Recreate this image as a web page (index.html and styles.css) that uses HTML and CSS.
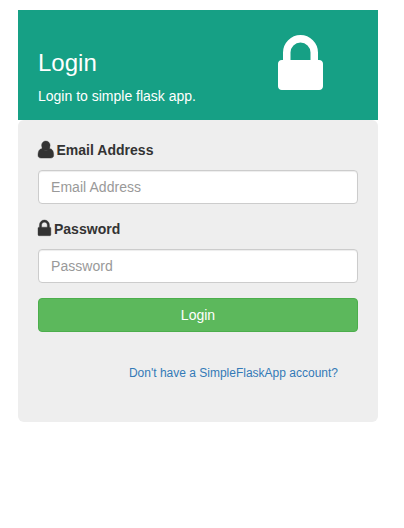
FILE: index.html
```html
<!DOCTYPE html>
<html lang="en">
<head>
<meta charset="utf-8">
<title>Login</title>
<link rel="stylesheet" href="styles.css">
</head>
<body>
<main class="card">
  <header class="card-top">
    <div class="card-title">
      <h3>Login</h3>
      <p>Login to simple flask app.</p>
    </div>
    <svg class="big-lock" viewBox="0 128 1152 1408"><path fill="#fff" d="M320 768h512v-192q0-106-75-181t-181-75-181 75-75 181v192zM1152 864v576q0 40-28 68t-68 28h-960q-40 0-68-28t-28-68v-576q0-40 28-68t68-28h32v-192q0-184 132-316t316-132 316 132 132 316v192h32q40 0 68 28t28 68z"/></svg>
  </header>
  <form class="card-bottom">
    <label for="email"><svg class="user" viewBox="0 0 1408 1536"><path d="M360 560h688v300h-688z"/><path transform="translate(0 1408) scale(1 -1)" d="M1408 131q0-120-73-189.500t-194-69.500h-874q-121 0-194 69.500t-73 189.500q0 53 3.500 103.500t14 109t26.500 108.500t43 97.500t62 81t85.500 53.500t111.500 20q9 0 42-21.500t74.500-48t108-48t133.500-21.500t133.500 21.500t108 48t74.500 48t42 21.500q61 0 111.500-20t85.500-53.500t62-81t43-97.500t26.500-108.500t14-109t3.500-103.500zM1088 1024q0-159-112.500-271.500t-271.500-112.500t-271.500 112.500t-112.500 271.500t112.500 271.500t271.500 112.500t271.500-112.500t112.500-271.500z"/></svg>Email Address</label>
    <input id="email" type="email" placeholder="Email Address">
    <label for="password"><svg class="lock" viewBox="0 128 1152 1408"><path d="M320 768h512v-192q0-106-75-181t-181-75-181 75-75 181v192zM1152 864v576q0 40-28 68t-68 28h-960q-40 0-68-28t-28-68v-576q0-40 28-68t68-28h32v-192q0-184 132-316t316-132 316 132 132 316v192h32q40 0 68 28t28 68z"/></svg>Password</label>
    <input id="password" type="password" placeholder="Password">
    <button type="button">Login</button>
    <a href="#">Don't have a SimpleFlaskApp account?</a>
  </form>
</main>
</body>
</html>
```
FILE: styles.css
```css
* { box-sizing: border-box; }
body { margin: 0; background: #fff; color: #333; font: 14px/20px "Liberation Sans", Arial, sans-serif; }
.card { width: 360px; margin: 10px 0 0 18px; }
.card-top { display: flex; justify-content: space-between; height: 110px; padding: 25px 55px 0 20px; background: #16a085; color: #fff; }
h3 { margin: 15px 0 10px; font-size: 24px; line-height: 26px; font-weight: 400; }
p { margin: 0; }
.big-lock { width: 45px; height: 55px; }
.card-bottom { display: flex; flex-direction: column; height: 302px; padding: 20px 20px 0; background: #eee; border-radius: 6px; }
label { display: flex; align-items: flex-start; height: 20px; margin-bottom: 10px; font-weight: 700; letter-spacing: .02px; }
label svg { fill: #333; stroke: #333; stroke-width: 35px; overflow: visible; }
.user { width: 15.7px; height: 17.1px; margin: 1.3px 2.8px 0 0; }
.lock { width: 12.86px; height: 15.7px; margin: 1.3px 3.1px 0 0; }
input { width: 100%; height: 34px; margin: 0 0 15px; padding: 6px 12px; border: 1px solid #ccc; border-radius: 4px; background: #fff; box-shadow: inset 0 1px 1px rgba(0,0,0,.075); font: inherit; letter-spacing: .05px; color: #555; }
input::placeholder { color: #999; opacity: 1; }
button { height: 34px; margin: 0; border: 1px solid #4cae4c; border-radius: 4px; background: #5cb85c; color: #fff; font: inherit; }
a { align-self: flex-end; margin: 31px 20px 0 0; font-size: 12px; color: #337ab7; text-decoration: none; }
```
